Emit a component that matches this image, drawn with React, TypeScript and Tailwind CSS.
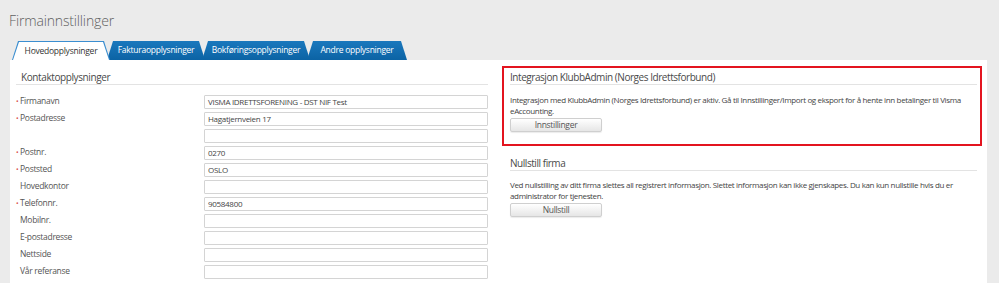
const font = "font-['Open_Sans',sans-serif]";

const rows: { label: string; required?: boolean; value?: string }[] = [
  { label: "Firmanavn", required: true, value: "VISMA IDRETTSFORENING - DST NIF Test" },
  { label: "Postadresse", required: true, value: "Hagatjernveien 17" },
  { label: "" },
  { label: "Postnr.", required: true, value: "0270" },
  { label: "Poststed", required: true, value: "OSLO" },
  { label: "Hovedkontor" },
  { label: "Telefonnr.", required: true, value: "90584800" },
  { label: "Mobilnr." },
  { label: "E-postadresse" },
  { label: "Nettside" },
  { label: "Vår referanse" },
];

const tabs = ["Hovedopplysninger", "Fakturaopplysninger", "Bokføringsopplysninger", "Andre opplysninger"];

function Tab({ label, active, width }: { label: string; active?: boolean; width: string }) {
  if (active) {
    return (
      <div className={`relative z-10 h-[19px] ${width} bg-[#3b8ed0] px-[1px] pt-[1px] [clip-path:polygon(0_100%,6px_0,calc(100%-6px)_0,100%_100%)]`}>
        <div className="flex h-full items-center justify-center bg-white [clip-path:polygon(0_100%,6px_0,calc(100%-6px)_0,100%_100%)]">
          <span className="text-[8.5px] tracking-[-0.25px] text-[#333]">{label}</span>
        </div>
      </div>
    );
  }
  return (
    <div className={`-ml-[3px] flex h-[19px] ${width} items-center justify-center bg-gradient-to-b from-[#1a78bd] to-[#0b63a4] [clip-path:polygon(0_100%,6px_0,calc(100%-6px)_0,100%_100%)]`}>
      <span className="text-[8.5px] tracking-[-0.25px] text-white">{label}</span>
    </div>
  );
}

function Button({ children }: { children: string }) {
  return (
    <div className="flex h-[14px] w-[92px] items-center justify-center rounded-[2px] border border-[#cfcfcf] bg-gradient-to-b from-white to-[#e6e6e6] text-[8.5px] tracking-[-0.3px] text-[#555] shadow-[0_1px_1px_rgba(0,0,0,0.08)]">
      {children}
    </div>
  );
}

export default function App() {
  return (
    <div className={`h-[283px] w-[999px] overflow-hidden bg-[#ebebeb] ${font}`}>
      <div className="pl-[9px] pt-[11px] text-[14px] leading-[20px] font-light tracking-[-0.15px] text-[#606060]">
        Firmainnstillinger
      </div>

      <div className="mt-[10px] flex pl-[12px]">
        <Tab label={tabs[0]} active width="w-[98px]" />
        <Tab label={tabs[1]} width="w-[98px]" />
        <Tab label={tabs[2]} width="w-[108px]" />
        <Tab label={tabs[3]} width="w-[100px]" />
      </div>

      <div className="ml-[10px] mr-[12px] flex h-[230px] bg-white pr-[5px]">
        {/* Kontaktopplysninger */}
        <div className="w-[478px] pl-[6px] pt-[10px]">
          <div className="border-b border-[#e3e3e3] pl-[5px] text-[10px] leading-[14px] tracking-[-0.4px] text-[#4a4a4a]">
            Kontaktopplysninger
          </div>
          <div className="mt-[8px]">
            {rows.map((r, i) => (
              <div key={i} className="flex h-[17px] items-center">
                <div className="flex w-[188px] items-center text-[8.5px] tracking-[-0.3px] text-[#555]">
                  <span className="w-[4px] text-[7px] leading-none text-[#d9534f]">{r.required ? "•" : ""}</span>
                  <span>{r.label}</span>
                </div>
                <div className="flex h-[14px] w-[284px] items-center rounded-[1px] border border-[#d4d4d4] pl-[3px] text-[8px] tracking-[-0.3px] text-[#444]">
                  {r.value}
                </div>
              </div>
            ))}
          </div>
        </div>

        {/* right column */}
        <div className="ml-[14px] w-[480px] pt-[6px]">
          <div className="border-2 border-[#e3141f] pb-[12px] pl-[6px] pr-[3px] pt-[2px]">
            <div className="border-b border-[#e3e3e3] text-[10px] leading-[14px] tracking-[-0.45px] text-[#4a4a4a]">
              Integrasjon KlubbAdmin (Norges Idrettsforbund)
            </div>
            <p className="mt-[9px] text-[8px] leading-[11px] tracking-[-0.35px] text-[#444]">
              Integrasjon med KlubbAdmin (Norges Idrettsforbund) er aktiv. Gå til Innstillinger/Import og eksport for å hente inn betalinger til Visma eAccounting.
            </p>
            <div className="mt-[2px]">
              <Button>Innstillinger</Button>
            </div>
          </div>

          <div className="mt-[10px] pl-[8px] pr-[5px]">
            <div className="border-b border-[#e3e3e3] text-[10px] leading-[14px] tracking-[-0.45px] text-[#4a4a4a]">
              Nullstill firma
            </div>
            <p className="mt-[8px] text-[8px] leading-[11px] tracking-[-0.35px] text-[#444]">
              Ved nullstilling av ditt firma slettes all registrert informasjon. Slettet informasjon kan ikke gjenskapes. Du kan kun nullstille hvis du er administrator for tjenesten.
            </p>
            <div className="mt-[2px]">
              <Button>Nullstill</Button>
            </div>
          </div>
        </div>
      </div>
    </div>
  );
}
